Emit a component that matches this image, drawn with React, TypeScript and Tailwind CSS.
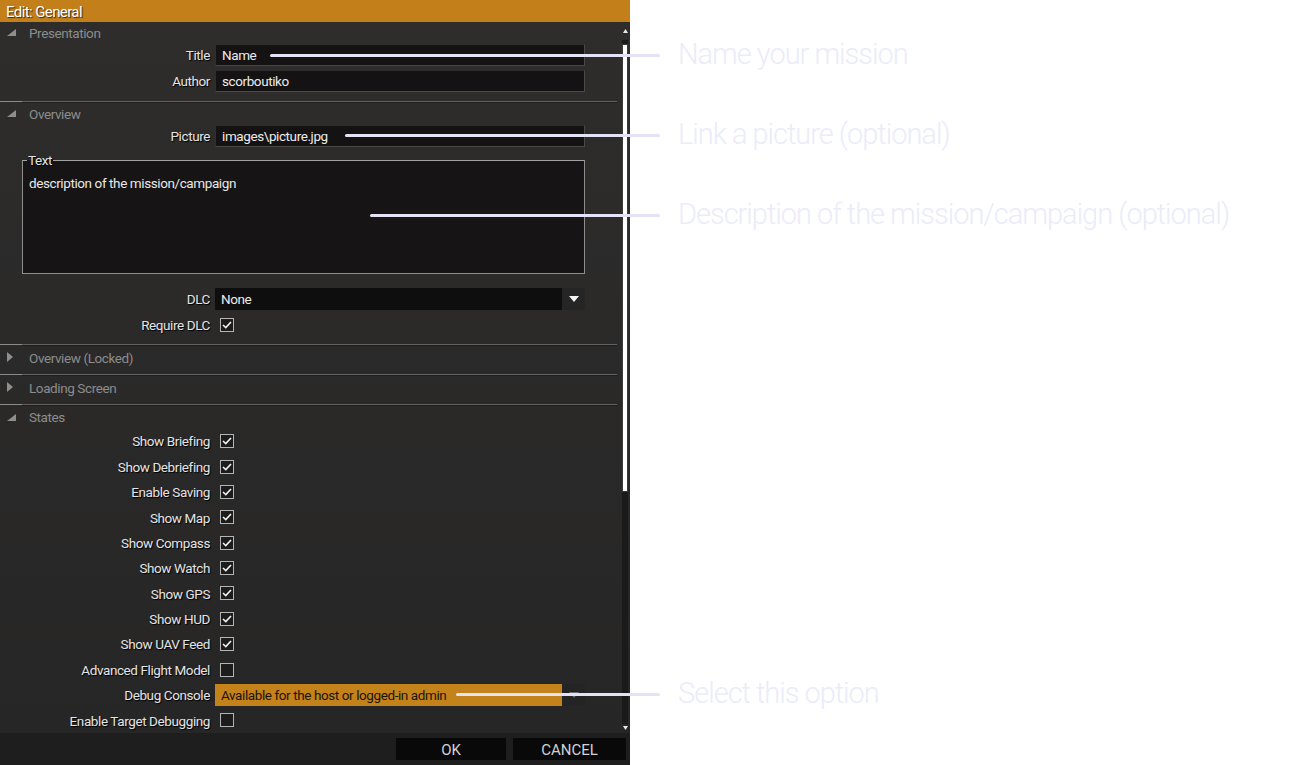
import React from 'react';

const font = "font-['Roboto',sans-serif]";
const txt = 'text-[13.5px] leading-none tracking-[-0.03em]';
const labelCls = `${txt} text-[#e4e4e4] [text-shadow:1px_1px_1px_#000]`;

const SectionHeader: React.FC<{ title: string; open?: boolean; className?: string }> = ({ title, open, className }) => (
  <div className={`flex items-center ${className ?? 'h-[21px]'}`}>
    <div className="w-[29px] flex items-center pl-[7px]">
      {open ? (
        <svg width="9" height="7" viewBox="0 0 9 7">
          <polygon points="9,0 9,7 0,7" fill="#8e8e8e" />
        </svg>
      ) : (
        <svg width="7" height="10" viewBox="0 0 7 10">
          <polygon points="0,0 6,5 0,10" fill="#8e8e8e" />
        </svg>
      )}
    </div>
    <span className={`${txt} pt-[2px] text-[#8c8c8c]`}>{title}</span>
  </div>
);

const Separator: React.FC = () => (
  <div className="flex h-[2px] w-[617px]">
    <div className="w-[22px] bg-[#8a8a8a] h-[1px]" />
    <div className="flex-1 flex flex-col">
      <div className="h-[1px] bg-[#636262]" />
      <div className="h-[1px] bg-[#1f1e1e]" />
    </div>
  </div>
);

const Label: React.FC<{ text: string }> = ({ text }) => (
  <div className={`w-[210px] text-right pt-[2px] ${labelCls}`}>{text}</div>
);

const FieldRow: React.FC<{ label: string; value: string; className?: string }> = ({ label, value, className }) => (
  <div className={`flex items-center h-[22px] ${className ?? ''}`}>
    <Label text={label} />
    <div className="ml-[5px] w-[370px] h-[22px] flex items-center px-[6px] pt-[2px] bg-[#141212] border border-[#2f2e2e] border-r-[#4a4949] border-b-[#4a4949]">
      <span className={`${txt} text-[#ececec]`}>{value}</span>
    </div>
  </div>
);

const Checkbox: React.FC<{ checked?: boolean }> = ({ checked }) => (
  <div className="ml-[10px] w-[14px] h-[14px] border-[1.5px] border-[#b4b4b4] bg-[#1d1c1c] flex items-center justify-center">
    {checked && (
      <svg width="10" height="8" viewBox="0 0 10 8">
        <polyline points="1,4 3.8,6.6 9,1" fill="none" stroke="#f2f2f2" strokeWidth="1.6" />
      </svg>
    )}
  </div>
);

const CheckRow: React.FC<{ label: string; checked?: boolean }> = ({ label, checked }) => (
  <div className="flex items-center h-[25.5px]">
    <Label text={label} />
    <Checkbox checked={checked} />
  </div>
);

const DropArrow: React.FC<{ dim?: boolean }> = ({ dim }) => (
  <svg width="10" height="6" viewBox="0 0 10 6">
    <polygon points="0,0 10,0 5,6" fill={dim ? '#6a6a6a' : '#f4f4f4'} />
  </svg>
);

const states: [string, boolean][] = [
  ['Show Briefing', true],
  ['Show Debriefing', true],
  ['Enable Saving', true],
  ['Show Map', true],
  ['Show Compass', true],
  ['Show Watch', true],
  ['Show GPS', true],
  ['Show HUD', true],
  ['Show UAV Feed', true],
  ['Advanced Flight Model', false],
];

const Note: React.FC<{ y: number; from: number; text: string }> = ({ y, from, text }) => (
  <>
    <div
      className="absolute h-[3px] rounded-full bg-[#e3e3f5]"
      style={{ top: y - 1, left: from, width: 660 - from }}
    />
    <div
      className="absolute left-[678px] font-['Roboto',sans-serif] font-light text-[29px] leading-none tracking-[-0.035em] text-[#ebebf9] whitespace-nowrap"
      style={{ top: y - 15 }}
    >
      {text}
    </div>
  </>
);

export default function App() {
  return (
    <div className={`relative w-[1300px] h-[765px] bg-white overflow-hidden ${font}`}>
      <div className="w-[630px] h-full flex flex-col bg-[#2a2928]">
        <div className="h-[22px] bg-[#c27f1a] flex items-center px-[6px] pt-[2px]">
          <span className="text-[15px] leading-none tracking-[-0.04em] text-white [text-shadow:1px_1px_1px_#3a2400]">Edit: General</span>
        </div>

        <div className="flex-1 flex bg-gradient-to-b from-[#2e2d2c] to-[#272626] overflow-hidden">
          <div className="w-[617px] flex flex-col">
            <SectionHeader title="Presentation" open />
            <FieldRow label="Title" value="Name" className="mt-[1px]" />
            <FieldRow label="Author" value="scorboutiko" className="mt-[4px]" />
            <div className="h-[9px]" />
            <Separator />

            <SectionHeader title="Overview" open />
            <FieldRow label="Picture" value="images\picture.jpg" className="mt-[1px]" />

            <fieldset className="mt-[7px] ml-[22px] w-[563px] h-[121px] border border-[#8e8e8e] border-t-[#a3a3a3] bg-[#161414] px-[6px]">
              <legend className={`ml-[-2px] px-[1px] ${labelCls}`}>Text</legend>
              <div className={`mt-[10px] ${txt} text-[#e8e8e8]`}>description of the mission/campaign</div>
            </fieldset>

            <div className="flex items-center h-[22px] mt-[14px]">
              <Label text="DLC" />
              <div className="ml-[5px] w-[370px] h-[22px] flex">
                <div className="flex-1 bg-[#0f0e0e] flex items-center px-[6px] pt-[2px]">
                  <span className={`${txt} text-[#ececec]`}>None</span>
                </div>
                <div className="w-[23px] bg-[#262525] flex items-center justify-center">
                  <DropArrow />
                </div>
              </div>
            </div>
            <div className="flex items-center h-[22px] mt-[4px]">
              <Label text="Require DLC" />
              <Checkbox checked />
            </div>
            <div className="h-[8px]" />
            <Separator />

            <SectionHeader title="Overview (Locked)" className="h-[23px]" />
            <div className="h-[5px]" />
            <Separator />
            <SectionHeader title="Loading Screen" className="h-[23px]" />
            <div className="h-[5px]" />
            <Separator />

            <SectionHeader title="States" open className="h-[23px]" />
            {states.map(([l, c]) => (
              <CheckRow key={l} label={l} checked={c} />
            ))}
            <div className="flex items-center h-[25.5px]">
              <Label text="Debug Console" />
              <div className="ml-[5px] w-[370px] h-[22px] flex">
                <div className="flex-1 bg-[#c4821b] flex items-center px-[6px] pt-[2px]">
                  <span className={`${txt} text-[#1c1408]`}>Available for the host or logged-in admin</span>
                </div>
                <div className="w-[23px] bg-[#252424] flex items-center justify-center">
                  <DropArrow dim />
                </div>
              </div>
            </div>
            <CheckRow label="Enable Target Debugging" />
          </div>

          <div className="flex-1 flex flex-col pl-[5px] pr-[2px] pt-[7px] pb-[3px]">
            <div className="h-[4px] flex justify-center">
              <svg width="5" height="4" viewBox="0 0 5 4">
                <polygon points="2.5,0 5,4 0,4" fill="#eaeaea" />
              </svg>
            </div>
            <div className="mt-[7px] flex-1 bg-[#1b1a1a] flex flex-col pt-[4px]">
              <div className="h-[448px] bg-white border border-[#3a3a3a]" />
            </div>
            <div className="h-[4px] mt-[2px] flex justify-center">
              <svg width="5" height="4" viewBox="0 0 5 4">
                <polygon points="0,0 5,0 2.5,4" fill="#eaeaea" />
              </svg>
            </div>
          </div>
        </div>

        <div className="h-[32px] bg-[#1f1e1e] flex items-center justify-end gap-[7px] pr-[4px]">
          <button className="w-[110px] h-[22px] pt-[2px] bg-[#090909] text-[15px] leading-none text-[#d2d2d2]">OK</button>
          <button className="w-[113px] h-[22px] pt-[2px] bg-[#090909] text-[15px] leading-none text-[#d2d2d2]">CANCEL</button>
        </div>
      </div>

      <Note y={55} from={270} text="Name your mission" />
      <Note y={135} from={345} text="Link a picture (optional)" />
      <Note y={215} from={370} text="Description of the mission/campaign (optional)" />
      <Note y={694} from={456} text="Select this option" />
    </div>
  );
}
